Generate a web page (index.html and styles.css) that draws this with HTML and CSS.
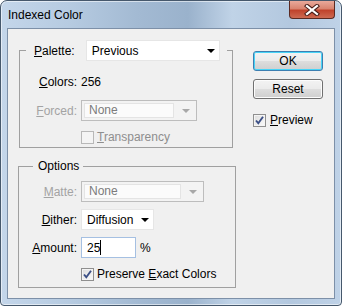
FILE: index.html
```html
<!DOCTYPE html>
<html lang="en">
<head>
    <meta charset="UTF-8">
    <title>Indexed Color</title>
    <link rel="stylesheet" href="styles.css">
</head>
<body>
    <div class="window">
        <div class="titlebar">
            <span class="title">Indexed Color</span>
            <div class="close">
                <svg width="16" height="12" viewBox="0 0 16 12">
                    <path d="M3 2 L13 10 M13 2 L3 10" stroke="#4a1f1a" stroke-width="4.2" stroke-linecap="square"/>
                    <path d="M3 2 L13 10 M13 2 L3 10" stroke="#ffffff" stroke-width="2.2" stroke-linecap="square"/>
                </svg>
            </div>
        </div>

        <div class="client">
            <div class="groups">
                <fieldset class="group group-palette">
                    <legend class="palette-row">
                        <span class="label"><u>P</u>alette:</span>
                        <div class="select select-palette"><span class="value">Previous</span><i class="arrow"></i></div>
                    </legend>
                    <div class="rows rows-palette">
                        <div class="row row-text"><span class="label"><u>C</u>olors:</span><span>256</span></div>
                        <div class="row"><span class="label disabled"><u>F</u>orced:</span>
                            <div class="select disabled select-forced"><span class="value">None</span><i class="arrow"></i></div>
                        </div>
                        <div class="row row-check"><span></span>
                            <label class="check disabled"><span class="box"></span><span><u>T</u>ransparency</span></label>
                        </div>
                    </div>
                </fieldset>

                <fieldset class="group group-options">
                    <legend class="options-legend">Options</legend>
                    <div class="rows rows-options">
                        <div class="row"><span class="label disabled"><u>M</u>atte:</span>
                            <div class="select disabled select-matte"><span class="value">None</span><i class="arrow"></i></div>
                        </div>
                        <div class="row"><span class="label"><u>D</u>ither:</span>
                            <div class="select select-dither"><span class="value">Diffusion</span><i class="arrow"></i></div>
                        </div>
                        <div class="row"><span class="label"><u>A</u>mount:</span>
                            <div class="amount">
                                <div class="textbox"><span>25</span><i class="caret"></i></div>
                                <span class="unit">%</span>
                            </div>
                        </div>
                        <div class="row row-check"><span></span>
                            <label class="check">
                                <span class="box checked"><svg width="11" height="11" viewBox="0 0 11 11"><path d="M2 5.5 L4.3 8.2 L9 1.8" fill="none" stroke="#3b4f86" stroke-width="1.9"/></svg></span>
                                <span>Preserve <u>E</u>xact Colors</span>
                            </label>
                        </div>
                    </div>
                </fieldset>
            </div>

            <div class="buttons">
                <div class="btn btn-default">OK</div>
                <div class="btn">Reset</div>
                <label class="check check-preview">
                    <span class="box checked"><svg width="11" height="11" viewBox="0 0 11 11"><path d="M2 5.5 L4.3 8.2 L9 1.8" fill="none" stroke="#3b4f86" stroke-width="1.9"/></svg></span>
                    <span><u>P</u>review</span>
                </label>
            </div>
        </div>
    </div>
</body>
</html>
```

FILE: styles.css
```css
* {
    margin: 0;
    padding: 0;
    box-sizing: border-box;
}

body {
    font-family: 'Liberation Sans', Arial, sans-serif;
    font-size: 12px;
    color: #000;
    background: #ffffff;
}

u {
    text-decoration: underline;
    text-underline-offset: 1px;
}

/* ウィンドウ枠 */
.window {
    width: 342px;
    height: 306px;
    border: 1px solid #46586c;
    border-radius: 7px 7px 4px 4px;
    background: linear-gradient(to right, #c4d6ea 0%, #b6cbe1 20%, #a3bad3 40%, #9ab2cc 55%, #c0d3e7 68%, #b3c8df 85%, #bfd2e7 100%);
    box-shadow: inset 0 0 0 1px rgba(255, 255, 255, 0.55);
    overflow: hidden;
}

.titlebar {
    height: 27px;
    display: flex;
    justify-content: space-between;
    align-items: flex-start;
}

.title {
    margin: 7px 0 0 7px;
    line-height: 15px;
    color: #000;
}

.close {
    width: 46px;
    height: 18px;
    margin-right: 6px;
    border: 1px solid #5b2a22;
    border-top: none;
    border-radius: 0 0 4px 4px;
    background: linear-gradient(to bottom, #e9a99b 0%, #d98470 45%, #c0432c 55%, #cd6a52 100%);
    display: flex;
    align-items: center;
    justify-content: center;
}

.client {
    width: 328px;
    height: 271px;
    margin-left: 6px;
    border: 1px solid #7d90a8;
    background: #f0f0f0;
    display: flex;
    padding: 11px 0 0 10px;
}

/* グループボックス */
.groups {
    width: 218px;
    display: flex;
    flex-direction: column;
}

.group {
    border: 1px solid #a0a0a0;
}

.group-palette {
    width: 214px;
    margin-left: 1px;
    padding: 0 0 4px 0;
}

.group-options {
    width: 218px;
    margin-top: 11px;
    padding: 0 0 7px 0;
}

.palette-row {
    margin-left: 6px;
    padding: 0 7px 0 8px;
    display: flex;
    align-items: center;
    gap: 11px;
}

.options-legend {
    margin-left: 14px;
    padding: 0 4px 0 5px;
    line-height: 15px;
}

.rows {
    display: flex;
    flex-direction: column;
}

.rows-palette {
    padding-top: 10px;
    gap: 8px;
}

.rows-options {
    padding-top: 7px;
    gap: 7px;
}

.row {
    display: grid;
    grid-template-columns: 57px auto;
    column-gap: 4px;
    align-items: center;
}

.rows-options .row {
    grid-template-columns: 58px auto;
}

.row-text {
    height: 21px;
}

.rows .row-check {
    margin-top: 1px;
    height: 13px;
}

.rows-options .row-check {
    margin-top: 2px;
}

.label {
    text-align: right;
    white-space: nowrap;
}

.label.disabled {
    color: #a3a3a3;
}

/* ドロップダウン */
.select {
    height: 21px;
    background: #fff;
    border: 1px solid #e6e6e6;
    display: flex;
    align-items: center;
    justify-content: space-between;
    padding: 0 4px 0 5px;
}

.select .arrow {
    width: 0;
    height: 0;
    border-left: 4px solid transparent;
    border-right: 4px solid transparent;
    border-top: 4px solid #000;
}

.select-palette {
    width: 134px;
}

.select-dither {
    width: 73px;
}

.select.disabled {
    border: 1px solid #bdbdbd;
    background: #f3f3f3;
    padding: 2px 6px 2px 2px;
    align-items: stretch;
}

.select.disabled .value {
    flex: 1;
    background: #fbfbfb;
    border: 1px solid #e4e4e4;
    color: #7c7c7c;
    padding-left: 4px;
    line-height: 13px;
    margin-right: 8px;
}

.select.disabled .arrow {
    align-self: center;
    border-top-color: #a8a8a8;
}

.select-forced {
    width: 116px;
}

.select-matte {
    width: 123px;
}

/* 量の入力欄 */
.amount {
    display: flex;
    align-items: center;
    gap: 4px;
}

.textbox {
    width: 55px;
    height: 21px;
    border: 1px solid #a5c0e2;
    background: #fff;
    display: flex;
    align-items: center;
    padding-left: 5px;
}

.caret {
    width: 1px;
    height: 15px;
    background: #000;
}

/* チェックボックス */
.check {
    display: flex;
    align-items: center;
    gap: 3px;
    white-space: nowrap;
}

.check.disabled {
    color: #8e8e8e;
}

.box {
    width: 13px;
    height: 13px;
    border: 1px solid #8f8f8f;
    background: linear-gradient(135deg, #dcdcdc, #fbfbfb);
    box-shadow: inset 0 0 0 1px #f4f4f4;
    display: flex;
    align-items: center;
    justify-content: center;
}

.check.disabled .box {
    border-color: #b8b8b8;
    background: #f4f4f4;
}

/* ボタン */
.buttons {
    margin-left: 17px;
    padding-top: 11px;
    display: flex;
    flex-direction: column;
    width: 70px;
}

.btn {
    height: 20px;
    border: 1px solid #707070;
    border-radius: 3px;
    background: linear-gradient(to bottom, #f3f3f3 0%, #ebebeb 48%, #dddddd 52%, #cfcfcf 100%);
    box-shadow: inset 0 0 0 1px #fcfcfc;
    text-align: center;
    line-height: 18px;
    margin-bottom: 8px;
}

.btn-default {
    border-color: #3c7fb1;
    box-shadow: inset 0 0 0 1px #48d4f7;
}

.check-preview {
    margin-top: 6px;
    gap: 4px;
}
```
